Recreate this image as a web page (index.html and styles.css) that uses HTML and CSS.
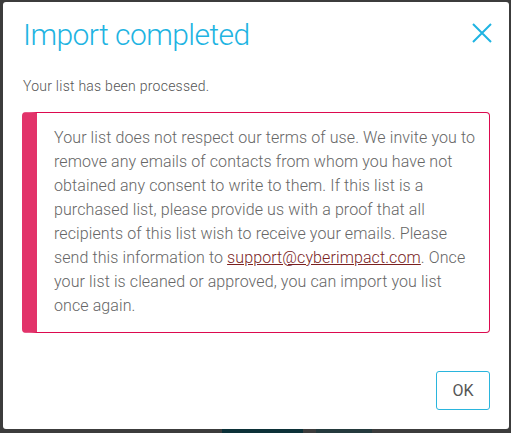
FILE: index.html
```html
<!DOCTYPE html>
<html lang="en">
<head>
    <meta charset="UTF-8">
    <meta name="viewport" content="width=device-width, initial-scale=1.0">
    <title>Import completed</title>
    <link rel="stylesheet" href="styles.css">
</head>
<body>

<div class="modal">
    <div class="modal-header">
        <h1>Import completed</h1>
        <button class="close" aria-label="Close">
            <svg width="20" height="20" viewBox="0 0 20 20">
                <path d="M1 1 L19 19 M19 1 L1 19" stroke="#1fb4e2" stroke-width="2" fill="none"/>
            </svg>
        </button>
    </div>

    <div class="modal-body">
        <p class="intro">Your list has been processed.</p>
        <div class="alert">
            <p>Your list does not respect our terms of use. We invite you to remove any emails of contacts from whom you have not obtained any consent to write to them. If this list is a purchased list, please provide us with a proof that all recipients of this list wish to receive your emails. Please send this information to <a href="#">support@cyberimpact.com</a>. Once your list is cleaned or approved, you can import you list once again.</p>
        </div>
    </div>

    <div class="modal-footer">
        <button class="btn-ok">OK</button>
    </div>
</div>

<div class="page-behind">
    <span class="behind-btn dark"></span>
    <span class="behind-btn"></span>
</div>

</body>
</html>
```

FILE: styles.css
```css
body {
    font-family: Roboto, "Liberation Sans", sans-serif;
    margin: 0;
    padding: 2px 2px 0 3px;
    background-color: #3c3c3c;
    height: 433px;
    box-sizing: border-box;
    overflow: hidden;
}
.modal {
    background: #fff;
    border-radius: 3px;
    width: 506px;
    height: 427px;
    box-sizing: border-box;
    padding: 0 19px;
    display: flex;
    flex-direction: column;
}
.modal-header {
    display: flex;
    justify-content: space-between;
    align-items: flex-start;
    padding-top: 15px;
}
.modal-header h1 {
    margin: 0;
    font-size: 30px;
    font-weight: 300;
    line-height: 36px;
    letter-spacing: -0.55px;
    color: #1fb4e2;
    padding-left: 1px;
}
.close {
    background: none;
    border: none;
    padding: 0;
    margin: 6px -2px 0 0;
    cursor: pointer;
    width: 20px;
    height: 20px;
    display: block;
}
.close svg {
    display: block;
}
.modal-body {
    padding-top: 24px;
}
.intro {
    margin: 0 0 17px;
    padding-left: 1px;
    font-size: 14px;
    font-weight: 300;
    line-height: 18px;
    letter-spacing: 0.25px;
    color: #555;
}
.alert {
    border: 1px solid #dc0a4f;
    border-left: 15px solid #e2336a;
    border-radius: 4px;
    padding: 13px 11px 14px 17px;
}
.alert p {
    margin: 0;
    font-size: 16px;
    font-weight: 300;
    line-height: 24px;
    letter-spacing: 0.1px;
    color: #666;
}
.alert a {
    color: #7a1f1f;
}
.modal-footer {
    margin-top: auto;
    padding-bottom: 19px;
    display: flex;
    justify-content: flex-end;
}
.btn-ok {
    width: 54px;
    height: 39px;
    background: #fff;
    border: 1px solid #2ab5dd;
    border-radius: 3px;
    font-family: Roboto, "Liberation Sans", sans-serif;
    font-size: 16px;
    font-weight: 400;
    color: #555;
    cursor: pointer;
}
.page-behind {
    display: flex;
    gap: 13px;
    padding-left: 219px;
}
.behind-btn {
    display: block;
    width: 56px;
    height: 8px;
    background: #243a3d;
    border-radius: 0 0 3px 3px;
}
.behind-btn.dark {
    width: 81px;
    background: #0c3138;
}
```
